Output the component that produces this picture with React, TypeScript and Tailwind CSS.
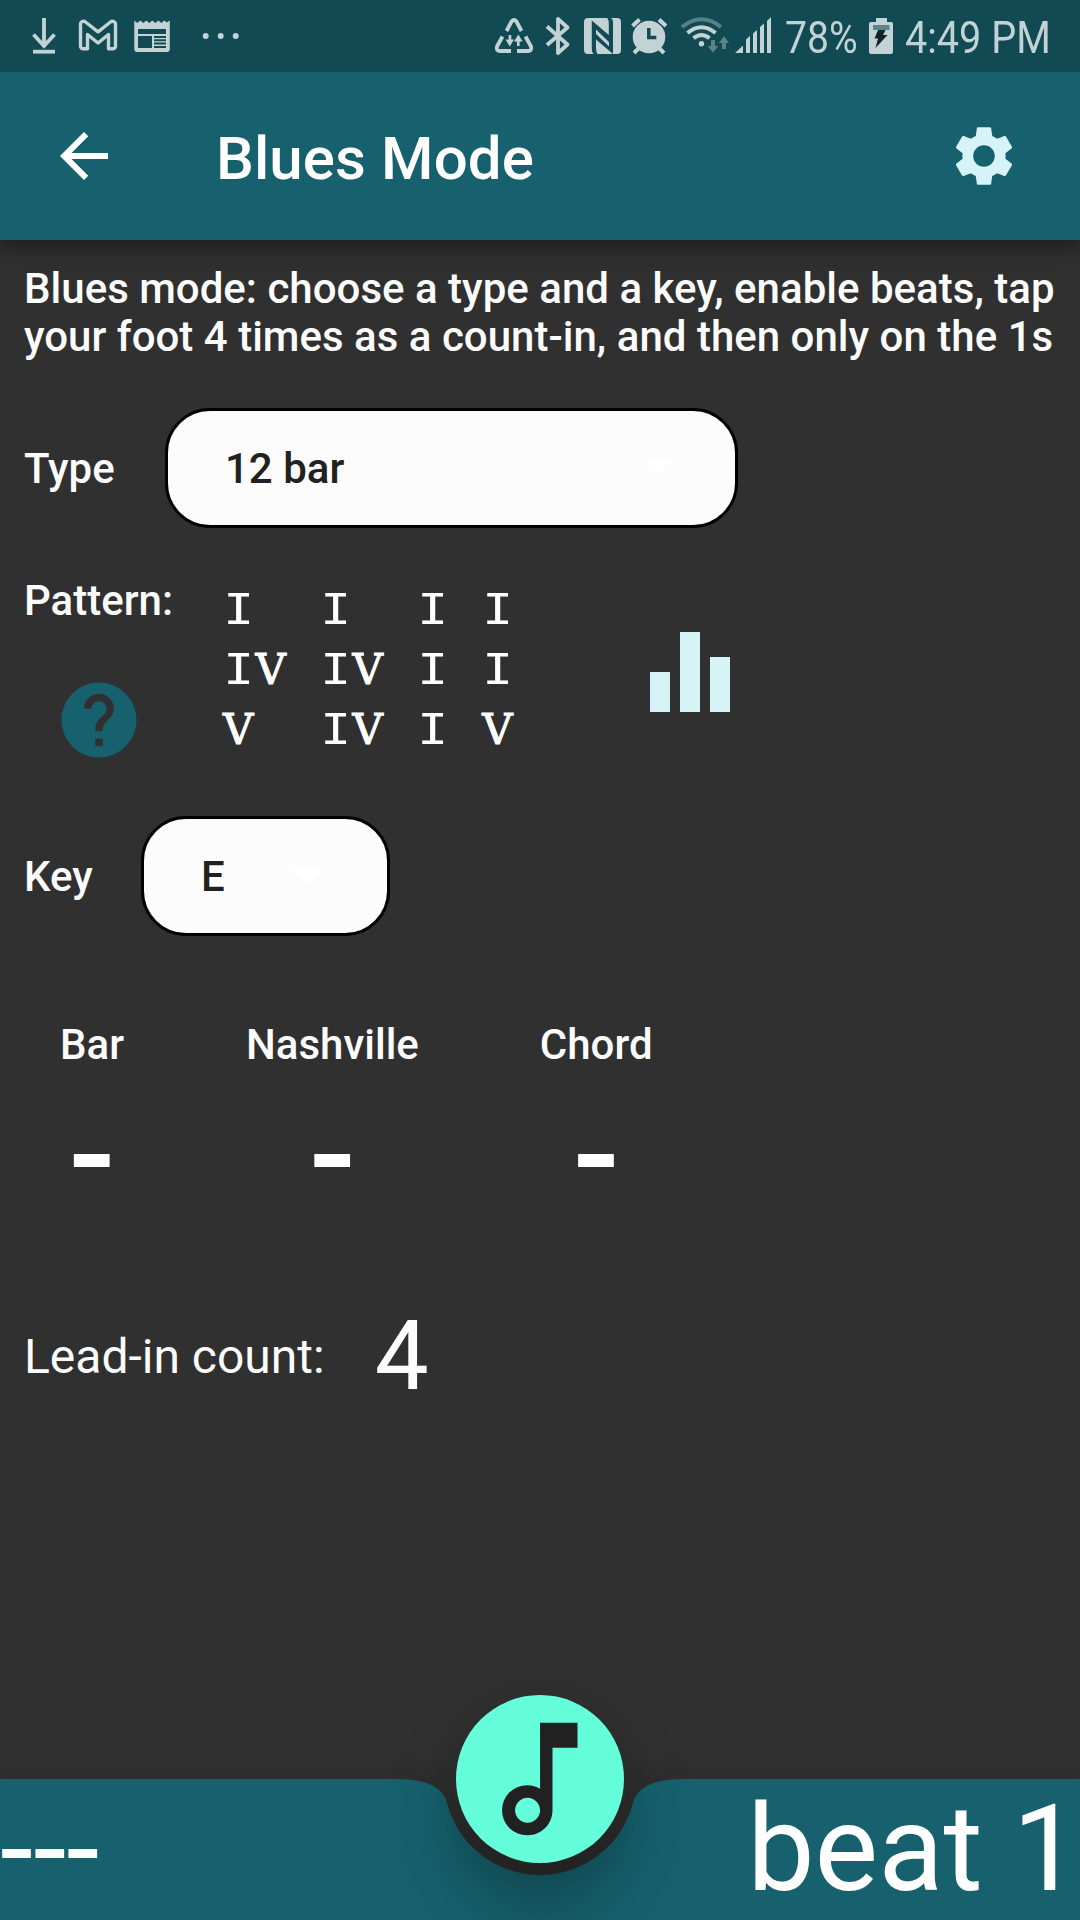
import type { ReactNode } from "react";
import { MdArrowBack, MdEqualizer, MdHelp, MdOutlineMusicNote, MdSettings } from "react-icons/md";

const PATTERN = [
  ["I", "I", "I", "I"],
  ["IV", "IV", "I", "I"],
  ["V", "IV", "I", "V"],
];

function StatusBar() {
  return (
    <div className="flex h-[72px] items-center bg-[#114a52] text-[#c3d2d5]">
      <svg className="ml-[30px] h-[72px] w-[28px] shrink-0" viewBox="30 0 28 72" fill="none" stroke="currentColor">
        <path d="M44 18v29M33.5 34.5L44 46l10.500-11.500" strokeWidth="3.800" />
        <path d="M33 51.700h22" strokeWidth="3.800" />
      </svg>
      <svg className="ml-[20px] h-[72px] w-[40px] shrink-0" viewBox="78 0 40 72" fill="none" stroke="currentColor" strokeWidth="3.400" strokeLinejoin="round">
        <path d="M86.500 48.700H83a2.500 2.500 0 0 1-2.500-2.500V24.500c0-3 3-4 5-2.500L98 31.800 110.500 22c2-1.500 5-.5 5 2.500v21.700a2.500 2.500 0 0 1-2.500 2.500h-4.500V34.500L98 43l-10.500-8.500v14.200z" />
      </svg>
      <svg className="ml-[15px] h-[72px] w-[38px] shrink-0" viewBox="133 0 38 72">
        <path fill="currentColor" d="M134.300 20.500l3 2.500 3-2.500 3 2.500 3-2.500 3 2.500 3-2.500 3 2.500 3-2.500 3 2.500 3-2.500 2.500 2 3-2V49a3 3 0 0 1-3 3h-29.500a3 3 0 0 1-3-3z" />
        <path fill="#114a52" d="M138 29h28v5h-28zM138 36h14v12h-14zM154 36h12v2h-12zM154 39.300h12v2h-12zM154 42.600h12v2h-12zM154 46h12v2h-12z" />
      </svg>
      <svg className="ml-[30px] h-[72px] w-[40px] shrink-0" viewBox="201 0 40 72" fill="currentColor">
        <circle cx="205.700" cy="36" r="3" />
        <circle cx="220.700" cy="36" r="3" />
        <circle cx="235.700" cy="36" r="3" />
      </svg>
      <div className="grow" />
      <svg className="h-[72px] w-[40px] shrink-0" viewBox="494 0 40 72" fill="none" stroke="currentColor" strokeWidth="3.800">
        <path d="M506.500 31l5-9.500q2.500-3 5 0l5 9.500M502.500 36.500l-5.500 10q-1 4.500 3 4.500h11M525.500 36.500l5.500 10q1 4.500-3 4.500h-11" />
        <path d="M510 35v6M518.300 40v6" strokeWidth="2.600" />
        <path fill="currentColor" stroke="none" d="M505.500 39.500h8.500l-4.200 7zM514 41.500h8.700l-4.400-7z" />
      </svg>
      <svg className="ml-[10px] h-[72px] w-[28px] shrink-0" viewBox="544 0 28 72" fill="none" stroke="currentColor" strokeWidth="3.800" strokeLinejoin="round">
        <path d="M547 26.500l20.500 18-9.500 8.500V19l9.500 8.500-20.500 17.500" />
      </svg>
      <svg className="ml-[11px] h-[72px] w-[40px] shrink-0" viewBox="583 0 40 72">
        <rect x="584" y="18" width="37" height="36" rx="4" fill="currentColor" />
        <path d="M591.8 20.500l17 14.500V24q0-4-1.500-6h3.700q2 1 2 4v32l-17-14.500V48q0 4 1.500 6h-4q-1.700-1.500-1.700-5z" fill="#114a52" />
        <path d="M596 29.500l13 12.500v4.500L596 34z" fill="currentColor" />
      </svg>
      <svg className="ml-[8px] h-[72px] w-[38px] shrink-0" viewBox="631 0 38 72">
        <circle cx="649" cy="37" r="16.300" fill="currentColor" />
        <path d="M632.500 26l7-6.500M659 19.500l7 6.500M639 48l-5 5M659 48l5 5" stroke="currentColor" strokeWidth="4" />
        <path d="M648.800 28v9.500h7.500" fill="none" stroke="#114a52" strokeWidth="3.500" />
      </svg>
      <svg className="ml-[11px] h-[72px] w-[50px] shrink-0" viewBox="680 0 50 72" fill="none" stroke="currentColor" strokeWidth="4">
        <path d="M682 27q19.500-15.500 39 0" opacity=".4" />
        <path d="M687.500 33q14-11.500 28 0M693.500 38.300q8-6.500 16 0" />
        <circle cx="701.500" cy="43.700" r="2.700" fill="currentColor" stroke="none" />
        <g fill="currentColor" stroke="none" opacity=".42">
          <path d="M711 40h4v6h3.500l-5.500 6.500-5.500-6.500h3.500zM722 49h4v-6h3l-5-7-5 7h3z" />
        </g>
      </svg>
      <svg className="ml-[5px] h-[72px] w-[37px] shrink-0" viewBox="735 0 37 72" fill="currentColor">
        <path d="M735 53l8-7.500V53zM746 53V39.500l4-3.700V53zM753 53V33.500l4-3.500V53zM760 53V27l4-3.500V53zM767 53V21l4-4v36z" />
      </svg>
      <span className="ml-[13px] w-[84px] shrink-0 text-[44px] leading-[72px] whitespace-nowrap">
        <span className="mt-[3px] block origin-left scale-x-[0.89]">78%</span>
      </span>
      <svg className="h-[72px] w-[26px] shrink-0" viewBox="869 0 26 72">
        <path fill="currentColor" d="M876 18h11v4h4a2 2 0 0 1 2 2v28a2 2 0 0 1-2 2h-20a2 2 0 0 1-2-2V24a2 2 0 0 1 2-2h5z" />
        <path fill="#5d858b" d="M873 25h16.500v5H873z" />
        <path fill="#0f2529" d="M878 30h7.500l-2.500 5h4.500l-12 13 2.500-9.500h-3.500z" />
      </svg>
      <span className="ml-[10px] w-[175px] shrink-0 text-[44px] leading-[72px] whitespace-nowrap">
        <span className="mt-[3px] block origin-left scale-x-[0.9]">4:49 PM</span>
      </span>
    </div>
  );
}

function Dropdown({ className, children }: { className: string; children: ReactNode }) {
  return (
    <div className={`flex h-[120px] items-center justify-between rounded-[45px] border-[3px] border-black bg-[#fcfcfc] text-[#212121] ${className}`}>
      <span>{children}</span>
      <svg className="h-[15px] w-[30px]" viewBox="0 0 30 15" fill="#ffffff">
        <path d="M0 0h30L15 15z" />
      </svg>
    </div>
  );
}

function Pattern() {
  return (
    <div className="flex flex-col font-normal text-white">
      {PATTERN.map((row, r) => (
        <div key={r} className="grid grid-cols-[97.2px_97.2px_64.8px_64.8px] leading-[60px]">
          {row.map((chord, c) => (
            <span key={c} className="flex">
              {chord.split("").map((letter, i) =>
                letter === "I" ? (
                  <span key={i} className="flex w-[32.4px] justify-center font-['DejaVu_Sans_Mono'] text-[42px]">
                    <span className="scale-x-[1.22]">I</span>
                  </span>
                ) : (
                  <span key={i} className="flex w-[32.4px] justify-center font-['DejaVu_Serif'] text-[42px] [-webkit-text-stroke:1px_white]">V</span>
                )
              )}
            </span>
          ))}
        </div>
      ))}
    </div>
  );
}

function Readout({ label, className }: { label: string; className: string }) {
  return (
    <div className={`flex flex-col items-center ${className}`}>
      <span className="leading-[48px]">{label}</span>
      <span className="mt-[20px] text-[138px] leading-[132px] text-white">-</span>
    </div>
  );
}

export default function App() {
  return (
    <div className="flex h-[1920px] w-[1080px] flex-col overflow-hidden bg-[#303030] font-['Roboto',sans-serif] text-[42px] font-medium text-[#fcfcfc]">
      <div className="relative z-10 shrink-0 font-normal">
        <StatusBar />
      </div>
      <header className="flex h-[168px] shrink-0 items-center bg-[#16616d] pr-[60px] pl-[48px] text-white shadow-[0_6px_12px_-3px_rgba(0,0,0,0.2),0_12px_15px_0_rgba(0,0,0,0.14),0_3px_30px_0_rgba(0,0,0,0.12)]">
        <MdArrowBack className="size-[72px]" />
        <h1 className="ml-[96px] grow pt-[5px] text-[60px] leading-[72px] tracking-[0.1px]">Blues Mode</h1>
        <MdSettings className="size-[72px] text-[#d6f3f8]" />
      </header>

      <main className="flex grow flex-col pl-[24px]">
        <p className="mt-[25px] leading-[48px] tracking-[0.015px] whitespace-nowrap">
          Blues mode: choose a type and a key, enable beats, tap
          <br />
          your foot 4 times as a count-in, and then only on the 1s
        </p>

        <div className="mt-[47px] flex h-[120px] items-center">
          <span className="w-[141px]">Type</span>
          <Dropdown className="w-[573px] pr-[63px] pl-[57px]">12 bar</Dropdown>
        </div>

        <div className="mt-[49px] flex h-[191px]">
          <div className="flex w-[198px] flex-col">
            <span className="leading-[48px]">Pattern:</span>
            <MdHelp className="mt-[50px] ml-[30px] size-[90px] text-[#16616d]" />
          </div>
          <div className="mt-[3px] w-[408px]">
            <Pattern />
          </div>
          <MdEqualizer className="mt-[35px] size-[120px] text-[#d6f3f8]" />
        </div>

        <div className="mt-[48px] flex h-[120px] items-center">
          <span className="w-[117px]">Key</span>
          <Dropdown className="w-[249px] pr-[63px] pl-[57px]">E</Dropdown>
        </div>

        <div className="mt-[85px] flex">
          <Readout label="Bar" className="ml-[36px]" />
          <Readout label="Nashville" className="ml-[122px]" />
          <Readout label="Chord" className="ml-[121px]" />
        </div>

        <div className="mt-[79px] flex items-center font-normal">
          <span className="pt-px text-[48px] leading-[60px]">Lead-in count:</span>
          <span className="ml-[50px] text-[96px] leading-[112px]">4</span>
        </div>
      </main>

      <footer className="relative flex h-[141px] shrink-0 items-center justify-between text-[120px] leading-[141px] font-normal text-white">
        <svg className="absolute top-0 left-0 h-[141px] w-[1080px] overflow-visible drop-shadow-[0_0_12px_rgba(0,0,0,0.12)]" viewBox="0 0 1080 141" fill="#16616d">
          <path d="M0 0H396Q441 0 446.900 23.450A96 96 0 0 0 633.100 23.450Q639 0 684 0H1080V141H0z" />
        </svg>
        <div className="absolute top-[-84px] left-[456px] flex size-[168px] items-center justify-center rounded-full bg-[#64ffda] text-[#212121] shadow-[0_44px_72px_0_rgba(0,0,0,0.28),0_4px_36px_0_rgba(0,0,0,0.04)]">
          <MdOutlineMusicNote className="size-[150px]" />
        </div>
        <span className="relative">---</span>
        <span className="relative">beat 1</span>
      </footer>
    </div>
  );
}
